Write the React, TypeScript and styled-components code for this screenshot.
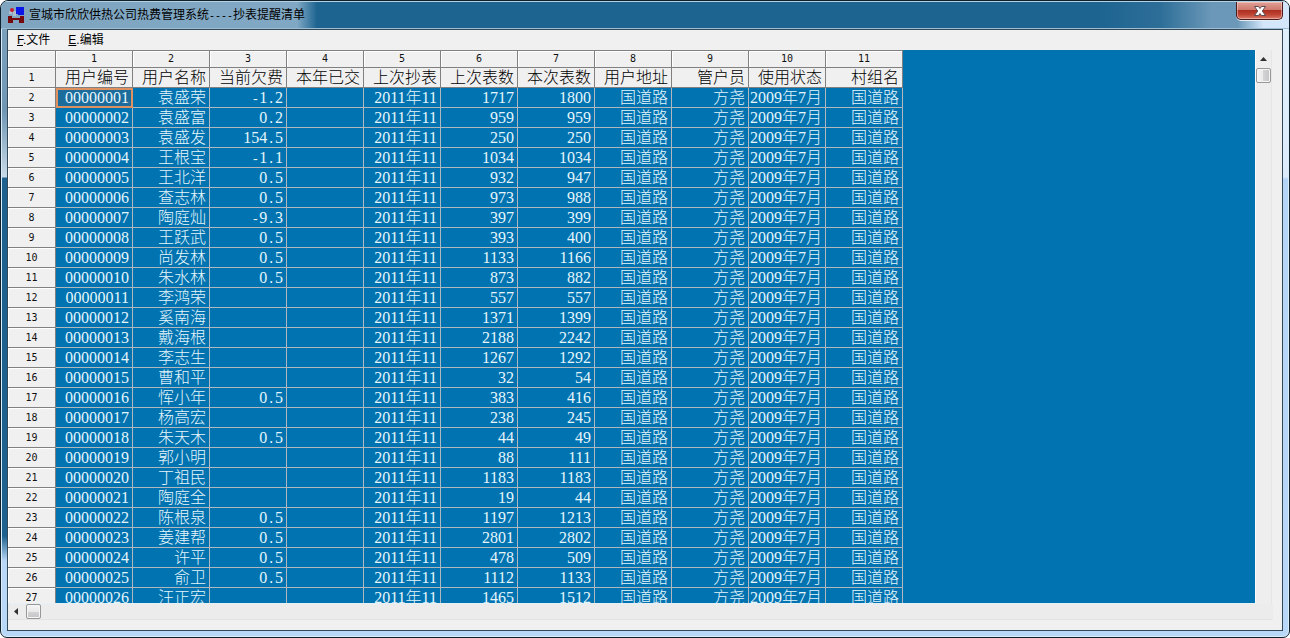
import React from "react";
import styled, { createGlobalStyle, css } from "styled-components";

const GlobalStyle = createGlobalStyle`
  * { box-sizing: border-box; }
  html, body, #root { height: 100%; margin: 0; }
  body { background: #fff; overflow: hidden; font-family: "Liberation Sans", "Noto Sans CJK SC", sans-serif; }
`;

const Window = styled.div`
  height: 100vh;
  display: flex;
  flex-direction: column;
  padding: 0 6px 6px;
  border: 1px solid #10202c;
  border-radius: 8px 8px 7px 7px;
  background:
    linear-gradient(#7fa3bf 0, #6f97b4 110px, #c9dbe8 176px, #1d628f 177px, #1d628f 535px, #b9d8f8 560px) left / 7px 100% no-repeat,
    linear-gradient(#e2f0fd 0, #dcebfb 176px, #b5d5f7 178px, #b9d8f8 100%);
  box-shadow: inset 0 0 0 1px #d9ecfa;
  overflow: hidden;
`;

const TitleBar = styled.header`
  display: flex;
  align-items: flex-start;
  height: 28px;
  flex: none;
  margin: 0 -6px;
  padding: 0 6px;
  border-top: 1px solid #b4d2e4;
  border-bottom: 1px solid #9dbdd0;
  background:
    linear-gradient(90deg, #7fa5c0 0, #80a8c4 296px, #1d6491 316px, #1d6491 85%, #2d6e98 90%, #6b98b8 94%, #6b98b8 96%, #d3e6fa 98%);
`;

const TitleIcon = styled.svg`
  width: 17px;
  height: 17px;
  margin: 4px 4px 0 1px;
`;

const Title = styled.h1`
  flex: 1;
  margin: 4px 0 0;
  font-size: 12px;
  line-height: 18px;
  font-weight: 400;
  color: #000;
  white-space: nowrap;
`;

const Dashes = styled.span`
  font-family: "Liberation Mono", monospace;
  font-size: 10px;
`;

const CloseButton = styled.button`
  display: flex;
  align-items: center;
  justify-content: center;
  width: 47px;
  height: 18px;
  padding: 0;
  border: 1px solid #4b1a1c;
  border-top: 0;
  border-radius: 0 0 5px 5px;
  background: linear-gradient(#dfa097 0, #cf7a6e 45%, #ad2f22 50%, #c04535 75%, #d9796a 100%);
  box-shadow: inset 0 0 0 1px rgba(255, 220, 210, 0.5), 0 1px 0 #e6eef5;
`;

const Client = styled.main`
  flex: 1;
  min-height: 0;
  display: flex;
  flex-direction: column;
  border: 1px solid #33495a;
  background: #f0f0f0;
`;

const MenuBar = styled.nav`
  display: flex;
  align-items: center;
  gap: 18px;
  height: 20px;
  flex: none;
  padding-left: 9px;
`;

const MenuItem = styled.button`
  padding: 0;
  border: 0;
  background: none;
  font: 12px/18px "Liberation Sans", "Noto Sans CJK SC", sans-serif;
  color: #000;
`;

const GridRow = styled.div`
  flex: 1;
  min-height: 0;
  display: flex;
  padding-right: 10px;
`;

const Viewport = styled.div`
  flex: 1;
  min-width: 0;
  overflow: hidden;
  background: #0073b0;
  border-bottom: 1px solid #e6f1f6;
`;

const Sheet = styled.table`
  table-layout: fixed;
  width: 895px;
  border-collapse: separate;
  border-spacing: 0;
`;

const CornerColumn = styled.col`
  width: 48px;
`;

const headCell = css`
  padding: 0;
  border-right: 1px solid #808080;
  border-bottom: 1px solid #808080;
  background: #f0f0f0;
  box-shadow: inset 1px 1px 0 #fff;
  font: 10px/16px "DejaVu Sans Mono", monospace;
  color: #111;
  text-align: center;
`;

const ColumnHead = styled.th`
  ${headCell}
  height: 18px;
  border-top: 1px solid #808080;
`;

const RowHead = styled.th`
  ${headCell}
  height: 20px;
`;

const Cell = styled.td<{ $label?: boolean; $active?: boolean }>`
  height: 20px;
  padding: 0 3px 0 0;
  border: 0 solid ${p => (p.$label ? "#808080" : "#b0b8be")};
  border-width: 0 1px 1px 0;
  background: ${p => (p.$label ? "#f0f0f0" : p.$active ? "#1c6c9c" : "#0073b0")};
  color: ${p => (p.$label ? "#000" : "#e6f6fd")};
  font: 16px/19px "Liberation Serif", "Noto Sans CJK SC", serif;
  font-weight: 300;
  text-align: right;
  white-space: nowrap;
  ${p => p.$active && "outline: 2px solid #e0915f; outline-offset: -2px;"}
`;

const Mark = styled.span`
  font-family: "Liberation Mono", monospace;
  font-size: 13px;
  line-height: 1;
`;

const VerticalBar = styled.div`
  flex: none;
  display: flex;
  flex-direction: column;
  align-items: flex-end;
  width: 17px;
  background: #eee;
  border-left: 1px solid #fafafa;
  border-right: 1px solid #e6e6e6;
`;

const HorizontalBar = styled.div`
  flex: none;
  display: flex;
  align-items: center;
  height: 16px;
  margin: 0 9px 10px 0;
  background: #ececec;
  border-bottom: 1px solid #e4e4e4;
`;

const ArrowButton = styled.button`
  display: flex;
  align-items: center;
  justify-content: center;
  width: 16px;
  height: 17px;
  padding: 0;
  border: 0;
  background: none;
`;

const Thumb = styled.div<{ $vertical?: boolean }>`
  width: 15px;
  height: 15px;
  margin: ${p => (p.$vertical ? "1px 0 0" : "0 0 0 2px")};
  border: 1px solid #979797;
  border-radius: 2px;
  background: linear-gradient(${p => (p.$vertical ? "90deg" : "180deg")}, #f5f5f5 0, #e9e9ea 50%, #d4d4d6 50%, #c4c4c8 100%);
  box-shadow: inset 0 0 0 1px #f6f6f6;
`;

const labels = ["用户编号", "用户名称", "当前欠费", "本年已交", "上次抄表", "上次表数", "本次表数", "用户地址", "管户员", "使用状态", "村组名"];

const customers: [string, string, string, string][] = [
  ["袁盛荣", "-1.2", "1717", "1800"],
  ["袁盛富", "0.2", "959", "959"],
  ["袁盛发", "154.5", "250", "250"],
  ["王根宝", "-1.1", "1034", "1034"],
  ["王北洋", "0.5", "932", "947"],
  ["查志林", "0.5", "973", "988"],
  ["陶庭灿", "-9.3", "397", "399"],
  ["王跃武", "0.5", "393", "400"],
  ["尚发林", "0.5", "1133", "1166"],
  ["朱水林", "0.5", "873", "882"],
  ["李鸿荣", "", "557", "557"],
  ["奚南海", "", "1371", "1399"],
  ["戴海根", "", "2188", "2242"],
  ["李志生", "", "1267", "1292"],
  ["曹和平", "", "32", "54"],
  ["恽小年", "0.5", "383", "416"],
  ["杨高宏", "", "238", "245"],
  ["朱天木", "0.5", "44", "49"],
  ["郭小明", "", "88", "111"],
  ["丁祖民", "", "1183", "1183"],
  ["陶庭全", "", "19", "44"],
  ["陈根泉", "0.5", "1197", "1213"],
  ["姜建帮", "0.5", "2801", "2802"],
  ["许平", "0.5", "478", "509"],
  ["俞卫", "0.5", "1112", "1133"],
  ["汪正宏", "", "1465", "1512"],
];

/* Sets the sign and the decimal point as wide as a digit, so that amounts line up. */
function Amount({ value }: { value: string }) {
  return <>{value.split(/([-.])/).map((part, i) => (/^[-.]$/.test(part) ? <Mark key={i}>{part}</Mark> : part))}</>;
}

export default function App() {
  return (
    <>
      <GlobalStyle />
      <Window>
        <TitleBar>
          <TitleIcon viewBox="0 0 17 17" aria-hidden="true">
            <path d="M5 5h3v5H5zM1 5h3v3H1z" fill="#b3bfce" />
            <circle cx="4" cy="4" r="2" fill="#c8202c" />
            <path d="M8 1h8v8h-6V8H8z" fill="#0a17e8" />
            <path d="M0 10h4v2h8v-2h4v7h-5v-3H5v3H0z" fill="#74090e" />
          </TitleIcon>
          <Title>宣城市欣欣供热公司热费管理系统<Dashes>----</Dashes>抄表提醒清单</Title>
          <CloseButton aria-label="关闭">
            <svg width="12" height="10" viewBox="0 0 12 10" aria-hidden="true">
              <path d="M.5.5h4L6 2.500 7.500.5h4L8.300 5l3.200 4.500h-4L6 7.500 4.500 9.500h-4L3.700 5z" fill="#fff" stroke="#5b4a50" strokeWidth="1" />
            </svg>
          </CloseButton>
        </TitleBar>
        <Client>
          <MenuBar>
            <MenuItem><u>F</u>.文件</MenuItem>
            <MenuItem><u>E</u>.编辑</MenuItem>
          </MenuBar>
          <GridRow>
            <Viewport>
              <Sheet>
                <colgroup>
                  <CornerColumn />
                  {labels.map(l => <col key={l} />)}
                </colgroup>
                <thead>
                  <tr>
                    <ColumnHead />
                    {labels.map((l, i) => <ColumnHead key={l} scope="col">{i + 1}</ColumnHead>)}
                  </tr>
                </thead>
                <tbody>
                  <tr>
                    <RowHead scope="row">1</RowHead>
                    {labels.map(l => <Cell key={l} $label>{l}</Cell>)}
                  </tr>
                  {customers.map(([name, due, previous, current], i) => (
                    <tr key={i}>
                      <RowHead scope="row">{i + 2}</RowHead>
                      <Cell $active={i === 0}>{String(i + 1).padStart(8, "0")}</Cell>
                      <Cell>{name}</Cell>
                      <Cell><Amount value={due} /></Cell>
                      <Cell />
                      <Cell>2011年11</Cell>
                      <Cell>{previous}</Cell>
                      <Cell>{current}</Cell>
                      <Cell>国道路</Cell>
                      <Cell>方尧</Cell>
                      <Cell>2009年7月</Cell>
                      <Cell>国道路</Cell>
                    </tr>
                  ))}
                </tbody>
              </Sheet>
            </Viewport>
            <VerticalBar>
              <ArrowButton aria-label="向上滚动">
                <svg width="7" height="4" viewBox="0 0 7 4" aria-hidden="true"><path d="M0 4 3.500 0 7 4z" fill="#303030" /></svg>
              </ArrowButton>
              <Thumb $vertical />
            </VerticalBar>
          </GridRow>
          <HorizontalBar>
            <ArrowButton aria-label="向左滚动">
              <svg width="4" height="7" viewBox="0 0 4 7" aria-hidden="true"><path d="M4 0 0 3.500 4 7z" fill="#303030" /></svg>
            </ArrowButton>
            <Thumb />
          </HorizontalBar>
        </Client>
      </Window>
    </>
  );
}
